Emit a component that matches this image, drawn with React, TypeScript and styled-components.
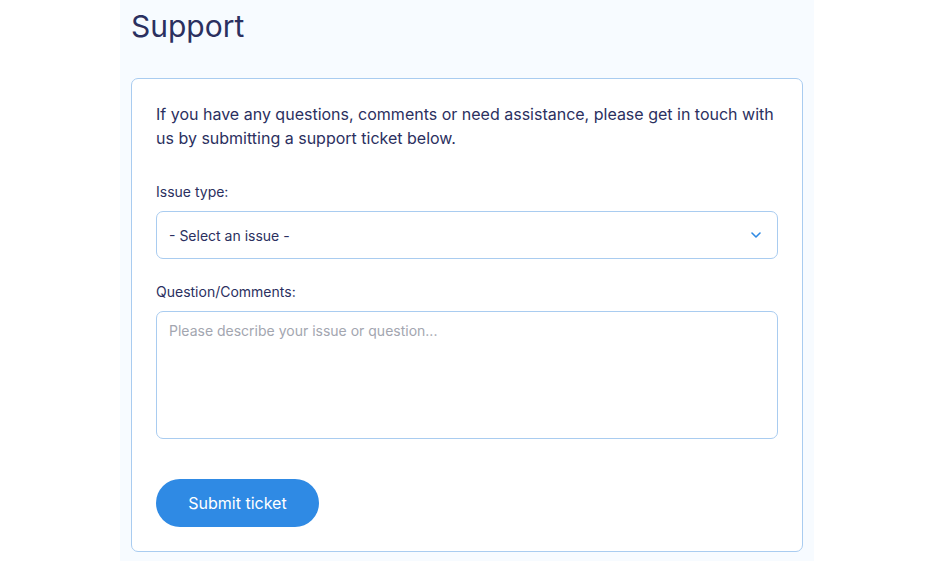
import * as React from 'react';
import styled, { createGlobalStyle } from 'styled-components';

const GlobalStyle = createGlobalStyle`
  html, body {
    margin: 0;
    padding: 0;
    background: #ffffff;
  }
  body {
    font-family: 'Inter', 'Noto Sans', sans-serif;
    color: #2b3060;
  }
  * {
    box-sizing: border-box;
  }
`;

const Panel = styled.main`
  margin-left: 120px;
  width: 694px;
  min-height: 100vh;
  background: #f7fbff;
  padding: 8px 11px 10px;
`;

const Heading = styled.h1`
  margin: 0 0 34px 0;
  font-size: 30px;
  line-height: 36px;
  font-weight: 400;
  color: #2b3060;
`;

const Card = styled.section`
  background: #ffffff;
  border: 1px solid #a9ccf0;
  border-radius: 7px;
  padding: 23px 24px 24px;
`;

const Intro = styled.p`
  margin: 0 0 32px 0;
  font-size: 16px;
  line-height: 24px;
  color: #2b3060;
`;

const Field = styled.div`
  display: flex;
  flex-direction: column;
  margin-bottom: ${props => props.$last ? '40px' : '23px'};
`;

const Label = styled.label`
  font-size: 14px;
  line-height: 20px;
  margin-bottom: 9px;
  color: #2b3060;
`;

const SelectBox = styled.div`
  height: 48px;
  border: 1px solid #a9ccf0;
  border-radius: 7px;
  display: flex;
  align-items: center;
  padding: 0 16px 0 12px;
  font-size: 14px;
  color: #2b3060;
`;

const SelectText = styled.span`
  flex: 1;
`;

const TextArea = styled.textarea`
  height: 128px;
  border: 1px solid #a9ccf0;
  border-radius: 7px;
  padding: 9px 12px;
  font-family: inherit;
  font-size: 14px;
  line-height: 20px;
  resize: none;
  color: #2b3060;
  outline: none;

  &::placeholder {
    color: #a3a6b0;
    opacity: 1;
  }
`;

const Button = styled.button`
  width: 163px;
  height: 48px;
  border: none;
  border-radius: 24px;
  background: #2f8ae4;
  color: #ffffff;
  font-family: inherit;
  font-size: 16px;
  cursor: pointer;
`;

const Chevron = () => (
  <svg width="10" height="6" viewBox="0 0 10 6" fill="none">
    <path d="M1 1l4 4 4-4" stroke="#2f8ae4" strokeWidth="1.6" strokeLinecap="round" strokeLinejoin="round" />
  </svg>
);

const App: React.FunctionComponent = () => (
  <>
    <GlobalStyle />
    <Panel>
      <Heading>Support</Heading>
      <Card>
        <Intro>
          If you have any questions, comments or need assistance, please get in touch with
          us by submitting a support ticket below.
        </Intro>
        <Field>
          <Label>Issue type:</Label>
          <SelectBox>
            <SelectText>- Select an issue -</SelectText>
            <Chevron />
          </SelectBox>
        </Field>
        <Field $last>
          <Label>Question/Comments:</Label>
          <TextArea placeholder="Please describe your issue or question..." />
        </Field>
        <Button>Submit ticket</Button>
      </Card>
    </Panel>
  </>
);

export default App;
